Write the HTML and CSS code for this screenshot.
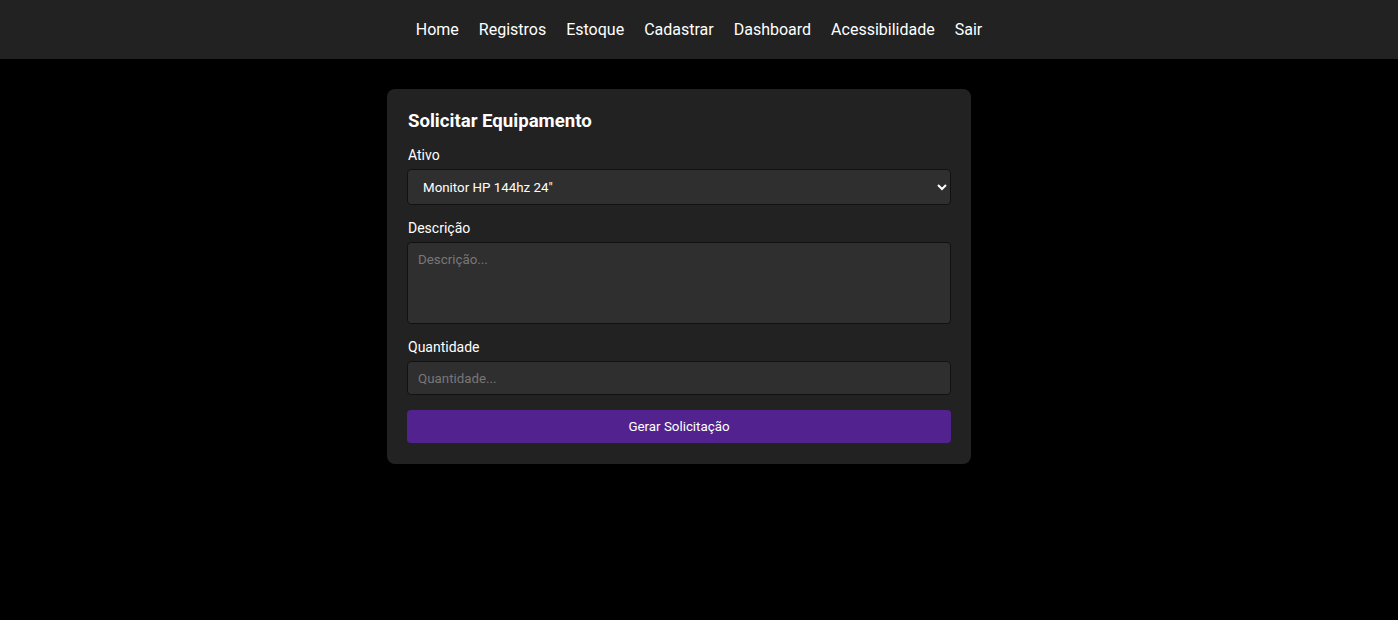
FILE: index.html
```html
<!DOCTYPE html>
<html lang="pt-BR">
<head>
<meta charset="utf-8">
<title>Solicitar Equipamento</title>
<link rel="stylesheet" href="styles.css">
</head>
<body>
<nav class="navbar">
  <a href="#">Home</a>
  <a href="#">Registros</a>
  <a href="#">Estoque</a>
  <a href="#">Cadastrar</a>
  <a href="#">Dashboard</a>
  <a href="#">Acessibilidade</a>
  <a href="#">Sair</a>
</nav>
<main class="wrap">
  <form class="card">
    <h2 class="title">Solicitar Equipamento</h2>
    <div class="group">
      <label class="label">Ativo</label>
      <div class="select-wrap">
        <select class="field select">
          <option>Monitor HP 144hz 24"</option>
        </select>
        <svg class="chev" width="10" height="8" viewBox="0 0 10 8"><path d="M1 2 L5 6 L9 2" fill="none" stroke="#fff" stroke-width="2"/></svg>
      </div>
    </div>
    <div class="group">
      <label class="label">Descrição</label>
      <textarea class="field area" placeholder="Descrição..."></textarea>
    </div>
    <div class="group">
      <label class="label">Quantidade</label>
      <input class="field input" placeholder="Quantidade...">
    </div>
    <button type="button" class="btn">Gerar Solicitação</button>
  </form>
</main>
</body>
</html>
```
FILE: styles.css
```css
html, body { margin: 0; padding: 0; }
body {
  background: #000;
  font-family: Roboto, "Liberation Sans", sans-serif;
  color: #fff;
}
.navbar {
  height: 59px;
  background: #222;
  display: flex;
  justify-content: center;
  align-items: center;
  gap: 20px;
  box-shadow: 0 1px 3px rgba(0,0,0,0.5);
}
.navbar a {
  color: #fff;
  text-decoration: none;
  font-size: 16px;
}
.wrap {
  width: 624px;
  margin: 30px auto 0;
}
.card {
  width: 584px;
  box-sizing: border-box;
  background: #222;
  border-radius: 8px;
  padding: 20px 20px 21px;
}
.title {
  margin: 1px 0 15px 1px;
  font-size: 18.6px;
  line-height: 22px;
  font-weight: 700;
}
.group { margin-bottom: 15px; }
.label {
  display: block;
  font-size: 14px;
  line-height: 17px;
  margin: 0 0 5px 1px;
}
.field {
  display: block;
  width: 100%;
  box-sizing: border-box;
  background: #2f2f2f;
  border: 1px solid #111;
  border-radius: 4px;
  color: #fff;
  font-family: Roboto, "Liberation Sans", sans-serif;
  font-size: 13.33px;
  outline: none;
}
.field::placeholder { color: #777; }
.select-wrap { position: relative; }
.select {
  height: 36px;
  appearance: none;
  -webkit-appearance: none;
  padding: 0 30px 0 15px;
  font-weight: 400;
}
.chev {
  position: absolute;
  right: 4px;
  top: 14px;
  pointer-events: none;
}
.area {
  height: 82px;
  padding: 9px 10px;
  resize: none;
}
.input {
  height: 34px;
  padding: 0 10px;
}
.btn {
  display: block;
  width: 100%;
  height: 33px;
  padding-top: 1px;
  background: #52238e;
  color: #fff;
  border: none;
  border-radius: 4px;
  font-family: Roboto, "Liberation Sans", sans-serif;
  font-size: 13.33px;
  font-weight: 400;
}
```
